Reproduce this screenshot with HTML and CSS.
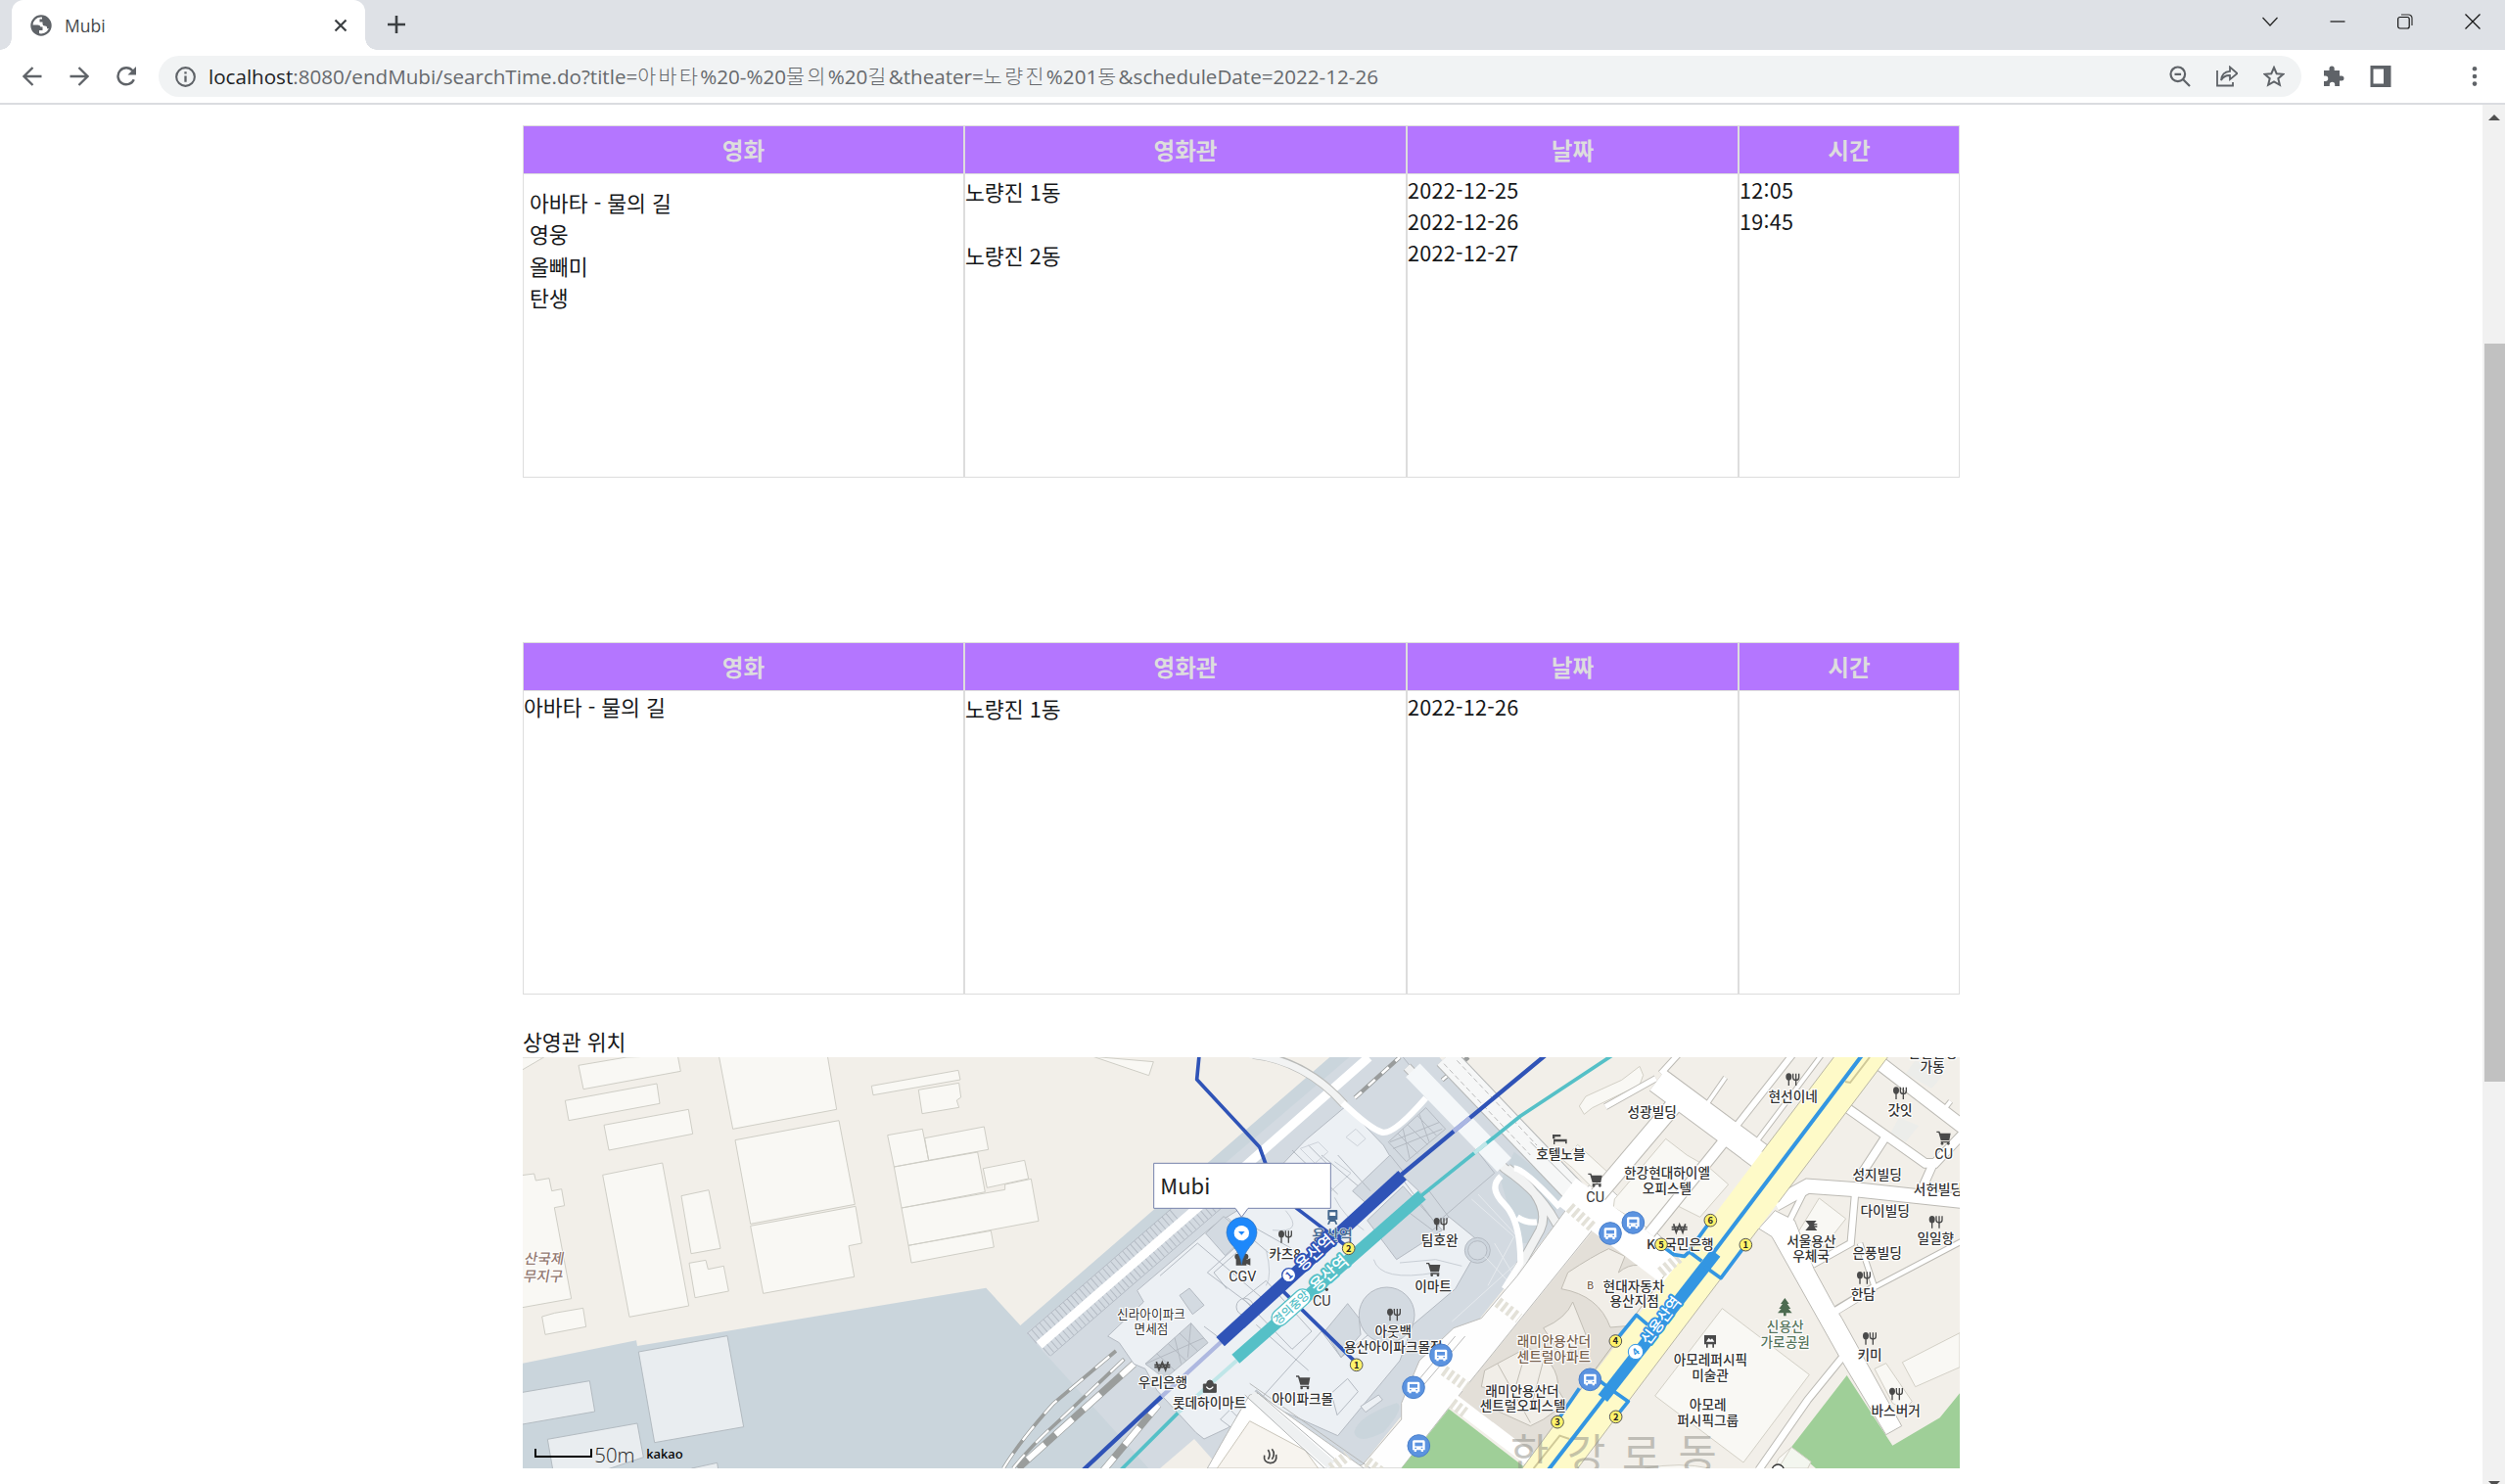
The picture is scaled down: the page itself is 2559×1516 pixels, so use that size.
FILE: index.html
```html
<!DOCTYPE html>
<html lang="ko">
<head>
<meta charset="utf-8">
<title>Mubi</title>
<link rel="stylesheet" href="styles.css">
</head>
<body>
<div class="window">
  <div class="tabstrip">
    <div class="tab">
      <svg class="globe" viewBox="0 0 22 22"><circle cx="11" cy="11" r="9.600" fill="#fff" stroke="#5f6368" stroke-width="2.200"/><path d="M1.500 10.500h6q2.500 0 3 2h2v3.500h-3.500v4.500Q2 18.500 1.500 10.500zM12 1.500v3H9.500v3h3v2q0 2 2.500 2t2 2.500q2.500 1 3.500-2Q21 3.500 12 1.500z" fill="#5f6368"/></svg>
      <span class="tab-title">Mubi</span>
      <svg class="tab-close" viewBox="0 0 14 14"><path d="M1.500 1.500l11 11M12.500 1.500l-11 11" stroke="#3c4043" stroke-width="2.200"/></svg>
    </div>
    <svg class="newtab" viewBox="0 0 18 18"><path d="M9 0v18M0 9h18" stroke="#3c4043" stroke-width="2.600"/></svg>
    <div class="winbtns">
      <svg viewBox="0 0 16 16"><path d="M.5 4L8 12 15.500 4" fill="none" stroke="#222" stroke-width="1.200"/></svg>
      <svg viewBox="0 0 16 16"><path d="M.5 8h15" stroke="#111" stroke-width="1.200"/></svg>
      <svg viewBox="0 0 16 16"><rect x=".7" y="3.500" width="11.500" height="11.500" rx="2" fill="none" stroke="#111" stroke-width="1.200"/><path d="M4 1h7.500a3.500 3.500 0 0 1 3.500 3.500V12" fill="none" stroke="#333" stroke-width="1.200"/></svg>
      <svg viewBox="0 0 16 16"><path d="M.5.5l15 15M15.500.5l-15 15" stroke="#111" stroke-width="1.200"/></svg>
    </div>
  </div>
  <div class="toolbar">
    <div class="navbtns">
      <svg viewBox="0 0 20 20"><path d="M19.500 10H2M10.500 1L1.500 10l9 9" fill="none" stroke="#5f6368" stroke-width="2.300"/></svg>
      <svg viewBox="0 0 20 20"><path d="M.5 10H18M9.500 1l9 9-9 9" fill="none" stroke="#5f6368" stroke-width="2.300"/></svg>
      <svg viewBox="0 0 20 20"><path d="M17.800 13.200A8.500 8.500 0 1 1 16.500 4.300" fill="none" stroke="#5f6368" stroke-width="2.400"/><path d="M20 0v8.500h-8.500z" fill="#5f6368"/></svg>
    </div>
    <div class="omnibox">
      <svg class="info" viewBox="0 0 20 20"><circle cx="10" cy="10" r="8.900" fill="none" stroke="#5f6368" stroke-width="2"/><path d="M10 9v6M10 5v2.200" stroke="#5f6368" stroke-width="2.200"/></svg>
      <span class="url"><b>localhost</b>:8080/endMubi/searchTime.do?title=<i>아바타</i>%20-%20<i>물의</i>%20<i>길</i>&amp;theater=<i>노량진</i>%201<i>동</i>&amp;scheduleDate=2022-12-26</span>
      <div class="omniicons">
        <svg viewBox="0 0 22 22"><circle cx="8.800" cy="8.800" r="7.300" fill="none" stroke="#5f6368" stroke-width="2.200"/><path d="M5.500 8.800h6.600M14 14l7 7" stroke="#5f6368" stroke-width="2.200"/></svg>
        <svg viewBox="0 0 22 22"><path d="M1 5v15.500h16V17" fill="none" stroke="#5f6368" stroke-width="1.800"/><path d="M5 15c.5-6 4-9 9-9.200V1.500L21.500 8 14 14.200V10c-4-.2-7 1.500-9 5z" fill="none" stroke="#5f6368" stroke-width="1.800"/></svg>
        <svg viewBox="0 0 22 22"><path d="M11 2l2.700 6.200 6.800.6-5.200 4.400 1.600 6.600L11 16.300l-5.900 3.500 1.600-6.600L1.500 8.800l6.800-.6z" fill="none" stroke="#5f6368" stroke-width="2"/></svg>
      </div>
    </div>
    <div class="exticons">
      <svg viewBox="0 0 22 22"><path d="M1 5h5.500V3a2.600 2.600 0 0 1 5.200 0v2H17v5.500h2a2.500 2.500 0 0 1 0 5h-2V21h-4.800v-1.500a2.700 2.700 0 0 0-5.400 0V21H1v-5h1.500a2.700 2.700 0 0 0 0-5.500H1z" fill="#5f6368"/></svg>
      <svg viewBox="0 0 22 22"><path d="M.5 0h21v22H.5zM3.500 3.500v15h10.500v-15z" fill="#5f6368" fill-rule="evenodd"/></svg>
      <svg class="dots" viewBox="0 0 22 22"><g fill="#5f6368"><circle cx="11" cy="3.200" r="2.300"/><circle cx="11" cy="11" r="2.300"/><circle cx="11" cy="18.600" r="2.300"/></g></svg>
    </div>
  </div>
  <div class="viewport">
    <main class="page">
      <table class="schedule">
        <colgroup><col class="c1"><col class="c2"><col class="c3"><col class="c4"></colgroup>
        <tr><th>영화</th><th>영화관</th><th>날짜</th><th>시간</th></tr>
        <tr>
          <td class="movies">아바타 - 물의 길<br>영웅<br>올빼미<br>탄생</td>
          <td class="theaters">노량진 1동<br><br>노량진 2동</td>
          <td class="dates">2022-12-25<br>2022-12-26<br>2022-12-27</td>
          <td class="dates">12:05<br>19:45</td>
        </tr>
      </table>
      <table class="schedule result">
        <colgroup><col class="c1"><col class="c2"><col class="c3"><col class="c4"></colgroup>
        <tr><th>영화</th><th>영화관</th><th>날짜</th><th>시간</th></tr>
        <tr>
          <td class="picked">아바타 - 물의 길</td>
          <td class="theaters">노량진 1동</td>
          <td class="dates">2022-12-26</td>
          <td></td>
        </tr>
      </table>
      <div class="map-title">상영관 위치</div>
      <svg class="map" viewBox="-1398 30 4404 1260">
        <defs>
          <g id="food" fill="#4a4a4a"><ellipse cx="-11" cy="-8" rx="9" ry="11"/><path d="M-13 0h4v19h-4zM9 0h4v19H9z"/><path d="M2-18v12q0 8 9 8t9-8v-12M11-18V0" fill="none" stroke="#4a4a4a" stroke-width="4"/></g>
          <g id="cart" fill="#4a4a4a"><path d="M-22-20h9l3 6h31l-4 22h-26l-7-24h-6zM-9 11h27v4H-9z"/><circle cx="-5" cy="18" r="4"/><circle cx="14" cy="18" r="4"/></g>
          <g id="bus"><circle r="34" fill="#5b93e0" stroke="#4a7fca" stroke-width="3"/><path d="M-15-17h30q4 0 4 5v25h-5v5h-7v-5H-7v5h-7v-5h-5v-25q0-5 4-5z" fill="#fff"/><path d="M-12-10h24V1h-24z" fill="#5b93e0"/><path d="M-12 5h5v4h-5zM7 5h5v4H7z" fill="#5b93e0"/></g>
          <g id="won" fill="none" stroke="#4a4a4a" stroke-width="6"><path d="M-18-13l8 26L0-11l10 24 8-26M-24-3h48M-24 4h48" stroke-width="5"/></g>
          <circle id="exit" r="19" fill="#fff36b" stroke="#555" stroke-width="3"/>
        </defs>
        <rect x="-1398" y="30" width="4404" height="1260" fill="#f2efe9"/>
        <!-- railway ground -->
        <path d="M-1398 968L-1050 898-1047 915 22 737 127 852 1000 95 1075 30H1410L1825 465 1720 600 1165 1290H-1398z" fill="#cad5dc"/>
        <path d="M145 875L1100 60 1135 30H1410L1825 465 1720 600 1165 1290H520L255 995z" fill="#d3dae1"/>
        <path d="M1440 30H1900V300L1825 465z" fill="#f2efe9"/>
        <path d="M1600 410L1640 320 1800 445 1710 600 1655 600z" fill="#cad5dc"/>
        <path d="M555 1290L660 1200 740 1290z" fill="#f2efe9"/>

        <!-- western blocks -->
        <g transform="translate(-1440 0)" fill="#f9f8f4" stroke="#cfcec6" stroke-width="3">
          <path d="M30 30H107L42 68 30 70z"/>
          <path d="M213 55L360 30 517 25 526 73 228 128zM172 163L453 111 462 172 183 224zM291 238L550 190 563 265 306 315zM642 20H975L1004 190 686 250zM693 284L1011 224 1060 481 740 541zM740 547L1062 487 1081 600 1041 608 1058 703 779 754zM287 391L470 354 551 792 369 826zM528 455L612 437 648 616 558 632zM552 661L603 652 610 680 658 670 673 747 570 767zM1111 118L1377 70 1383 99 1116 146zM1255 130L1379 109 1385 153 1372 162 1379 184 1266 203z"/>
          <path d="M1160 269L1267 250 1286 346 1180 366zM1274 278L1456 243 1469 313 1286 346zM1180 366L1436 321 1459 443 1203 492zM1203 492L1520 436 1520 420 1600 403 1623 532 1224 607zM1224 607L1477 562 1486 612 1233 660zM1453 371L1580 346 1592 402 1465 430z"/>
          <path d="M30 393L77 387 82 408 123 401 131 440 161 434 170 485 139 491 191 770 30 799zM101 825L140 814 227 799 236 856 111 880z"/>
          <g fill="#e9edf0" stroke="#b3bbc1"><path d="M397 933L669 884 719 1163 446 1211zM30 1059L247 1022 263 1116 30 1157zM118 1201L393 1152 412 1256 250 1310H137zM560 1290L638 1273 642 1300z"/></g>
        </g>
        <path d="M350 28L535 44 521 86z" fill="#f9f8f4" stroke="#cfcec6" stroke-width="3"/>

        <!-- tracks -->
        <g fill="none">
          <path d="M162 892L610 505M203 930L740 465" stroke="#b4bbc4" stroke-width="42" stroke-dasharray="3 13"/>
          <path d="M147 877L590 494M220 945L760 478" stroke="#b4bbc4" stroke-width="3"/>
          <path d="M185 912L830 352 1195 30" stroke="#fff" stroke-width="28"/>
          <g stroke="#9a9d9c">
            <path d="M75 1290Q130 1200 230 1090L420 930" stroke-width="11"/><path d="M105 1290Q160 1220 250 1140L445 955" stroke-width="11"/><path d="M120 1290L475 970" stroke-width="22"/><path d="M370 1310L550 1095" stroke-width="22"/>
          </g>
          <g stroke="#fff"><path d="M75 1290Q130 1200 230 1090L420 930" stroke-width="7" stroke-dasharray="55 50"/><path d="M105 1290Q160 1220 250 1140L445 955" stroke-width="7" stroke-dasharray="55 50"/><path d="M120 1290L475 970" stroke-width="18" stroke-dasharray="0 40 70 45 70 45 70 45"/><path d="M370 1310L550 1095" stroke-width="18" stroke-dasharray="70 50"/></g>
          <path d="M1152 155L1290 30M1420 100L1500 30" stroke="#999c9c" stroke-width="13"/><path d="M1152 155L1290 30M1420 100L1500 30" stroke="#fff" stroke-width="8" stroke-dasharray="28 28"/>
        </g>

        <!-- station complex -->
        <g stroke="#b4bac2" stroke-width="3" fill="#ecf0f4">
          <path d="M395 885L505 780 485 745 720 545 800 495 1000 285 1125 180 1240 300 1290 385 1380 470 1540 600 1460 740 1330 850 1290 960 1100 1190 920 1110 850 1050 790 1130 765 1165 690 1200 665 1180 545 1050 510 985 475 970 430 905z"/>
          <path d="M555 700L670 600 870 770 750 900 690 855M700 690L850 555 1000 640 860 810zM760 520L900 640M810 770L880 715 1020 870 960 925zM850 850L1010 990M920 1110L870 1070 1050 870 1110 950 1290 800M1180 440L1050 330M960 315L1100 450M760 740L720 690 800 620" fill="none"/>
          <path d="M695 570L750 518 820 575 755 638zM615 760L645 738 690 790 655 818zM1060 870L1130 785 1165 830 1170 880 1110 950z" fill="#d3dae1"/>
          <path d="M510 970L650 845 702 905 570 1015z" fill="#cdd4db"/><path d="M545 938L600 990M580 908L635 960M615 876L670 930M510 970L690 890M600 890L620 970M650 845L640 950" fill="none"/>
          <path d="M1145 440L1260 330 1300 380 1200 490zM1190 530L1300 425 1420 560 1280 650zM1310 500L1380 440 1440 520 1390 560z" fill="#d3dae1"/>
          <path d="M1255 290L1370 185 1430 250 1310 350z" fill="#d3dae1"/><path d="M1285 265L1345 325M1315 238L1375 298M1345 210L1402 270M1260 290L1410 230M1300 250L1320 340M1350 205L1380 290M1270 310L1420 250" fill="none"/>
          <path d="M1300 30L1420 180 1580 385 1400 540 1280 380M1100 330L1200 440M1010 300L1080 370" fill="none"/>
          <path d="M1040 290L1070 320 1030 355 985 310zM1155 250L1185 280 1160 302 1125 275z" fill="none" stroke="#cdd2d9"/>
          <path d="M1090 350L1140 385 1080 440M1090 460Q1120 520 1180 560M880 620Q900 700 880 730M900 560Q1000 570 940 500M1210 650Q1230 720 1400 690M1290 660L1400 650 1480 670" fill="none" stroke="#c8ced5"/>
          <path d="M1080 1060L1130 1015 1162 1055 1098 1127zM1170 1100L1225 1065 1237 1080 1185 1118zM740 1140L770 1110 805 1145 780 1170z"/>
          <circle cx="1250" cy="820" r="85" fill="#d3dae1"/><circle cx="1528" cy="622" r="39" fill="#cdd5dd"/><circle cx="1528" cy="622" r="29" fill="#d3dae1"/><circle cx="815" cy="795" r="26" fill="none"/>
        </g>
        <g fill="none" stroke="#e6eaee" stroke-width="3"><path d="M1510 465L1640 580 1560 730M1530 450L1660 590M1550 640L1620 715M1450 840L1660 650M1580 600L1640 700"/></g>
        <path d="M1150 1180Q1160 1130 1280 1090 1310 1100 1240 1180 1160 1220 1150 1180z" fill="#cad5dc"/>

        <!-- overpass and ramps -->
        <g fill="none" stroke-linejoin="round">
          <path d="M840 22Q1000 40 1120 175" stroke="#b9bab8" stroke-width="27"/><path d="M830 22Q1000 40 1120 175" stroke="#f2f3f3" stroke-width="21"/>
          <path d="M1115 170Q1200 250 1235 260T1370 155" stroke="#fff" stroke-width="19"/>
          <path d="M1312 60L1610 370Q1730 450 1780 560T1630 740M1620 370Q1760 470 1720 560L1620 740" stroke="#b5b7b7" stroke-width="30"/>
          <path d="M1312 60L1610 370Q1730 450 1780 560T1630 740M1620 370Q1760 470 1720 560L1620 740" stroke="#f1f2f2" stroke-width="24"/>
          <path d="M1330 70L1610 360" stroke="#f4f7f9" stroke-width="60"/>
          <path d="M1600 395Q1560 430 1610 480T1660 660L1610 740M1640 370Q1670 370 1780 490M1650 520Q1680 540 1710 535" stroke="#fff" stroke-width="19"/>
          <path d="M1430 30L1850 470" stroke="#b5b7b7" stroke-width="75"/><path d="M1430 30L1850 470" stroke="#f6f7f7" stroke-width="69"/>
          <path d="M1425 50L1690 330M1465 40L1710 300" stroke="#bbb" stroke-width="3" stroke-dasharray="16 9"/>
          <path d="M1690 290L1880 480" stroke="#b5b7b7" stroke-width="3"/>
        </g>

        <!-- streets -->
        <g transform="translate(900 0)">
          <path d="M1000 540L1200 680 1160 770 800 1245 560 1080z" fill="#e3dfd8"/>
          <g fill="#f1eee8" stroke="#c2beb5" stroke-width="3"><path d="M905 690Q980 640 1030 617L1080 640 1060 690Q1120 640 1180 700L1200 750 1130 850 1035 858Q1000 760 885 740zM920 780Q900 830 830 860L890 950 960 880zM640 1040L650 990 780 920Q880 960 875 1050L900 1090 830 1140 790 1160 680 1110 690 1050z"/><path d="M690 970L790 1150M780 920L730 1090M830 960L790 1110" fill="none"/></g>
          <path d="M930 455L1000 400 1200 590V690L1000 535 540 1105 395 1290H160L275 1280 395 1140 395 1090 450 960 555 860 640 830 750 700 905 490z" fill="#fefefe" stroke="#bdbdbb" stroke-width="3"/>
          <path d="M430 1040L560 885M450 1050L590 885" fill="none" stroke="#bbb" stroke-width="3"/>
          <path d="M-70 1030L300 1290M20 1130L180 1290" stroke="#b5b7b7" stroke-width="3" fill="none"/>
          <path d="M550 1080L800 1270" stroke="#fff" stroke-width="42"/>
          <path d="M540 1108L770 1285 765 1290H395z" fill="#9fcf98"/>
        </g>
        <path d="M700 1290Q790 1130 830 1065L855 1060 1180 1290z" fill="#fff" stroke="#b9bab8" stroke-width="3"/>
        <path d="M730 1290L830 1145 1000 1235 1040 1290z" fill="#f7f4ef" stroke="#c9c5ba" stroke-width="3"/><path d="M835 1065L1080 1280" stroke="#eef0f1" stroke-width="30"/>
        <path d="M850 1055L1100 1270M815 1065L1060 1290" stroke="#b1b4b5" stroke-width="3"/>

        <g transform="translate(1800 0)">
          <g fill="#f9f8f4" stroke="#d3d0c6" stroke-width="3">
            <path d="M40 180L60 150 170 100 225 58 236 85 225 115 80 185 55 205zM-10 345L35 298 130 385 80 430 20 370zM148 465L305 280 370 330 440 370 497 420 410 520 330 480 260 560 145 490zM775 462L857 525 790 610 690 600zM478 800L745 1003 543 1272 272 1068zM1030 965L1206 875V980L1070 1040zM945 985L980 968 1060 1085 1035 1110 1000 1090zM650 1260L690 1225 750 1270 740 1290H640z"/>
            <path d="M1070 40L1140 70 1150 90 1120 125 1040 80zM1020 215L1080 240 1040 290 995 260z" fill="#ecedea" stroke="none"/>
          </g>
          <g fill="none" stroke="#bcbab4" stroke-linecap="butt">
            <path d="M120 182L275 95M290 80L345 20" stroke-width="22"/>
            <path d="M65 490L340 165" stroke-width="55"/><path d="M280 100L610 345" stroke-width="84"/>
            <path d="M255 570L485 285" stroke-width="38"/><path d="M488 92L420 190" stroke-width="17"/>
            <path d="M695 20L510 255" stroke-width="24"/><path d="M785 20L575 300" stroke-width="18"/>
            <path d="M950 40L1230 255" stroke-width="46"/><path d="M860 185L1100 355 1130 355 1220 260" stroke-width="32"/><path d="M975 280L890 410M1125 355L1085 445" stroke-width="30"/>
            <path d="M640 480L740 425 880 435 1230 473" stroke-width="48"/><path d="M725 450L680 540" stroke-width="22"/>
            <path d="M885 450L872 600 755 665" stroke-width="25"/><path d="M900 600L945 735 1220 590" stroke-width="20"/><path d="M945 735L820 810" stroke-width="28"/>
            <path d="M850 945L740 1080 590 1295" stroke-width="26"/><path d="M1150 200L1178 165" stroke-width="18"/>
          </g>
          <path d="M590 555L640 500 700 530 760 680 820 790 845 830 1028 1160 980 1187 835 945 630 580z" fill="#fff" stroke="#bcbab4" stroke-width="3"/>
          <g fill="none" stroke="#fff">
            <path d="M120 182L275 95M290 80L345 20" stroke-width="16"/>
            <path d="M65 490L340 165" stroke-width="49"/><path d="M280 100L610 345" stroke-width="78"/>
            <path d="M255 570L485 285" stroke-width="32"/><path d="M488 92L420 190" stroke-width="11"/>
            <path d="M695 20L510 255" stroke-width="18"/><path d="M785 20L575 300" stroke-width="12"/>
            <path d="M950 40L1230 255" stroke-width="40"/><path d="M860 185L1100 355 1130 355 1220 260" stroke-width="26"/><path d="M975 280L890 410M1125 355L1085 445" stroke-width="24"/>
            <path d="M640 480L740 425 880 435 1230 473" stroke-width="42"/><path d="M725 450L680 540" stroke-width="16"/>
            <path d="M885 450L872 600 755 665" stroke-width="19"/><path d="M900 600L945 735 1220 590" stroke-width="14"/><path d="M945 735L815 815" stroke-width="22"/>
            <path d="M850 945L740 1080 590 1295" stroke-width="20"/><path d="M1150 200L1178 165" stroke-width="12"/>
            <path d="M0 440L330 690" stroke-width="100"/>
          </g>
          <path d="M820 30H985L35 1290H-135z" fill="#fefac8"/>
          <path d="M985 30L650 475M590 555L35 1290M-135 1290L300 700M820 30L600 320" fill="none" stroke="#b9b6a4" stroke-width="3"/>
          <path d="M930 30L870 108 855 105M-100 1290L-20 1190 10 1200" fill="none" stroke="#d0c998" stroke-width="6"/>
          <path d="M860 1005L1000 1220 1145 1135 1206 1060V1290H765L690 1225z" fill="#9fcf98"/>
          <path d="M690 1225L750 1270 740 1290H650z" fill="#f3f6ef" stroke="#d3d0c6" stroke-width="3"/>
          <path d="M240 1290Q350 1270 440 1290" fill="#f9f8f4" stroke="#d3d0c6" stroke-width="3"/>
          <circle cx="649" cy="1296" r="18" fill="#fff" stroke="#333" stroke-width="4"/>
        </g>
        <!-- crosswalks -->
        <g fill="none" stroke="#e3e1d8" stroke-width="34" stroke-dasharray="11 9">
          <path d="M1810 490L1885 555M1590 780L1655 830M1425 990L1495 1040M1450 1090L1490 1120M2090 690L2150 640M1080 1290L1130 1250M1190 1270L1230 1300"/>
        </g>

        <text class="district" x="1688" y="1293">한</text><text class="district" x="1862" y="1293">강</text><text class="district" x="2030" y="1293">로</text><text class="district" x="2202" y="1293">동</text>

        <!-- subway lines -->
        <g fill="none" stroke-linejoin="round">
          <g stroke="#2f53b7">
            <path d="M675 25L668 98 860 305 880 360M970 490L1130 612M930 745L1155 965" stroke-width="11"/>
            <path d="M1735 25L1295 390M560 1070L320 1295" stroke-width="13"/><path d="M1505 216L1455 257" stroke="#aab6e2" stroke-width="14"/>
            <path d="M745 900L560 1070" stroke="#aeb8e0" stroke-width="13"/>
            <path d="M1298 392L740 902" stroke-width="38"/>
          </g>
          <g stroke="#55c0c7">
            <path d="M1940 25L1660 210 1355 455M610 1120L435 1295" stroke-width="11"/><path d="M1556 293L1518 324M790 960L610 1120" stroke="#bfe6e8" stroke-width="12"/>
            <path d="M1358 453L787 955" stroke-width="36"/>
          </g>
          <g stroke="#3396e2" transform="translate(1800 0)">
            <path d="M908 22L450 630M115 1075L-55 1295" stroke-width="12"/>
            <path d="M458 630L112 1075" stroke-width="36"/>
            <path d="M550 605L474 707 425 672M440 535L375 625 415 655M290 605L330 635 362 640 378 625M150 900L215 820 250 850M152 1132L190 1085 130 1043 100 1020M-28 1145L40 1045" stroke-width="11"/>
          </g>
        </g>

        <!-- place labels -->
        <g class="labels">
          <g class="area"><text transform="translate(-1334 662) skewX(-10)">산국제</text><text transform="translate(-1337 716) skewX(-10)">무지구</text></g>
          <text x="528" y="832" class="sm">신라아이파크</text><text x="528" y="875" class="sm">면세점</text>
          <text x="564" y="1040">우리은행</text><text x="707" y="1105">롯데하이마트</text><text x="992" y="1093">아이파크몰</text>
          <text x="808" y="716" class="latin">CGV</text><text x="938" y="647">카츠8</text><text x="1051" y="793" class="latin">CU</text>
          <text x="1270" y="885">아웃백</text><text x="1270" y="932">용산아이파크몰점</text>
          <text x="1412" y="607">팀호완</text><text x="1392" y="746">이마트</text>
          <text x="1783" y="343">호텔노블</text><text x="1889" y="473" class="latin">CU</text>
          <text x="2063" y="213">성광빌딩</text><text x="2109" y="400">한강현대하이엘</text><text x="2109" y="447">오피스텔</text>
          <text x="2149" y="618">KB국민은행</text><text x="2007" y="746">현대자동차</text><text x="2009" y="792">용산지점</text>
          <g class="brown"><text x="1874" y="741" class="b">B</text><text x="1762" y="914">래미안용산더</text><text x="1762" y="964">센트럴아파트</text></g>
          <text x="1665" y="1067">래미안용산더</text><text x="1667" y="1113">센트럴오피스텔</text>
          <g transform="translate(1800 0)">
            <text x="442" y="971">아모레퍼시픽</text><text x="441" y="1021">미술관</text><text x="434" y="1111">아모레</text><text x="434" y="1159">퍼시픽그룹</text>
            <text x="695" y="164">현선이네</text><text x="1023" y="206">갓잇</text><text x="1123" y="30">한일빌딩</text><text x="1122" y="76">가동</text><text x="1157" y="343" class="latin">CU</text>
            <text x="953" y="405">성지빌딩</text><text x="1140" y="449">서헌빌딩</text><text x="977" y="517">다이빌딩</text><text x="1132" y="601">일일향</text><text x="953" y="644">은풍빌딩</text>
            <text x="751" y="608">서울용산</text><text x="750" y="655">우체국</text><text x="910" y="772">한담</text><text x="930" y="957">키미</text><text x="1010" y="1127">바스버거</text>
            <g class="park"><text x="671" y="870">신용산</text><text x="671" y="917">가로공원</text></g>
          </g>
          <text x="1083" y="592" class="station">용산역</text>
        </g>

        <!-- line name labels -->
        <text class="onblue" transform="translate(990 688) rotate(-42)" font-size="50">용산역</text>
        <circle cx="950" cy="698" r="21" fill="#fff" stroke="#2f53b7" stroke-width="4"/><text class="num blue" transform="translate(950 698) rotate(-42)" y="11">1</text>
        <text class="onteal" transform="translate(1034 752) rotate(-42)" font-size="50">용산역</text>
        <rect x="-72" y="-25" width="144" height="50" rx="25" transform="translate(957 797) rotate(-42)" fill="#fff" stroke="#55c0c7" stroke-width="4"/><text class="pill" transform="translate(957 797) rotate(-42)" y="13">경의중앙</text>
        <text class="online4" transform="translate(2052 914) rotate(-53)" font-size="46">신용산역</text>
        <circle cx="2013" cy="933" r="23" fill="#fff" stroke="#3396e2" stroke-width="3"/><text class="num sky" transform="translate(2013 933) rotate(-42)" y="11">4</text>

        <use href="#food" x="938" y="580"/><use href="#food" x="1414" y="541"/><use href="#food" x="1271" y="819"/>
        <use href="#food" x="2493" y="98"/><use href="#food" x="2822" y="140"/><use href="#food" x="2932" y="535"/><use href="#food" x="2711" y="706"/><use href="#food" x="2729" y="892"/><use href="#food" x="2810" y="1062"/>
        <use href="#cart" x="994" y="1026"/><use href="#cart" x="1393" y="680"/><use href="#cart" x="1889" y="406"/><use href="#cart" x="2957" y="277"/>
        <use href="#won" x="562" y="976"/><use href="#won" x="2147" y="554"/>
        <path d="M688 1032h39v25h-39zM698 1032q0-12 10-12t10 12" fill="#4a4a4a" stroke="#4a4a4a" stroke-width="3"/><path d="M697 1040q10 14 21 0" fill="none" stroke="#fff" stroke-width="4"/>
        <path d="M1758 267h7v13h-7zM1765 267h18v7h-18zM1761 281h41v14h-5v-6h-32v8h-4z" fill="#4a4a4a"/>
        <path d="M2533 531h34l-8 9h10v4h-8l-2 3h10v4h-8l8 10h-36l12-15z" fill="#4a4a4a"/>
        <path d="M2470 768l13 18h-6l11 15h-7l11 13h-18v9h-8v-9h-18l11-13h-7l11-15h-6z" fill="#4d6b50"/>
        <path d="M2223 882h36v28h-6v10h-5v-10h-14v10h-5v-10h-6z" fill="#4a4a4a"/><path d="M2229 902l8-12 5 6 5-4 7 10z" fill="#fff"/>
        <path d="M875 1250q-4 22 18 24 22-2 18-26M886 1262q10-14 0-29M898 1262q12-16 0-31" fill="none" stroke="#4a4a4a" stroke-width="5"/>
        <path d="M1071 498h26q2 0 2 4v26h-6l6 14h-6l-3-8h-13l-3 8h-6l6-14h-5v-26q0-4 2-4z" fill="#46698f"/><path d="M1075 505h18v11h-18z" fill="#fff"/>
        <circle cx="1066" cy="742" r="5" fill="#4a4a4a"/>
        <use href="#bus" x="1332" y="1042"/><use href="#bus" x="1416" y="943"/><use href="#bus" x="1348" y="1221"/><use href="#bus" x="1935" y="570"/><use href="#bus" x="2005" y="537"/><use href="#bus" x="1873" y="1018"/>
        <g class="exits">
          <use href="#exit" x="1133" y="616"/><text x="1133" y="626">2</text><use href="#exit" x="1157" y="973"/><text x="1157" y="983">1</text>
          <use href="#exit" x="2242" y="530"/><text x="2242" y="540">6</text><use href="#exit" x="2350" y="605"/><text x="2350" y="615">1</text>
          <use href="#exit" x="2091" y="604"/><text x="2091" y="614">5</text><use href="#exit" x="1951" y="900"/><text x="1951" y="910">4</text>
          <use href="#exit" x="1952" y="1132"/><text x="1952" y="1142">2</text><use href="#exit" x="1773" y="1148"/><text x="1773" y="1158">3</text>
        </g>

        <!-- marker and info window -->
        <path d="M788 645h32v6l12-5v22l-12-5v5h-32z" fill="#4a4a4a"/><circle cx="793" cy="641" r="9" fill="#4a4a4a"/><circle cx="817" cy="641" r="9" fill="#4a4a4a"/>
        <path d="M805 665Q803 640 780 610 760 590 759 567A46 46 0 0 1 852 567Q851 590 831 610 808 640 805 665z" fill="#1e88fa" stroke="#3674b8" stroke-width="2"/><circle cx="805" cy="569" r="23" fill="#fff"/><path d="M795 564h20l-10 11z" fill="#1e88fa"/>
        <path d="M536 355H1078V493H825L805 520 786 493H536z" fill="#fff" stroke="#7682ab" stroke-width="3"/>
        <text class="bubble" x="556" y="450">Mubi</text>
        <path d="M-1359 1230V1254H-1188V1230" fill="none" stroke="#000" stroke-width="6"/>
        <text class="scale" x="-1178" y="1271">50m</text><text class="kakao" x="-1019" y="1259">kakao</text>
      </svg>
    </main>
    <div class="scrollbar"><i class="up"></i><div class="thumb"></div><i class="down"></i></div>
  </div>
</div>
</body>
</html>
```
FILE: styles.css
```css
* { box-sizing: border-box; }
html, body { margin: 0; height: 100%; overflow: hidden; }
body { font-family: "Noto Sans CJK KR", sans-serif; color: #16181a; background: #fff; }
svg { display: block; flex: none; }
.window { display: flex; flex-direction: column; height: 1516px; }

.tabstrip { display: flex; height: 51px; background: #dee1e6; padding-left: 12px; flex: none; }
.tab { position: relative; display: flex; align-items: center; width: 361px; height: 51px; background: #fff; border-radius: 12px 12px 0 0; padding: 0 18px 0 19px; }
.tab::before, .tab::after { content: ""; position: absolute; bottom: 0; width: 12px; height: 12px; }
.tab::before { left: -12px; background: radial-gradient(circle at 0 0, #dee1e6 11.5px, #fff 12px); }
.tab::after { right: -12px; background: radial-gradient(circle at 100% 0, #dee1e6 11.5px, #fff 12px); }
.globe { width: 22px; height: 22px; }
.tab-title { font: 17.5px "Open Sans", sans-serif; color: #45494d; margin-left: 13px; flex: 1; }
.tab-close { width: 14px; height: 14px; }
.newtab { width: 18px; height: 18px; margin: 16px 0 0 23px; }
.winbtns { display: flex; gap: 53px; margin: 14px 25px 0 auto; }
.winbtns svg { width: 16px; height: 16px; }

.toolbar { display: flex; align-items: center; height: 56px; border-bottom: 2px solid #dadce0; flex: none; }
.navbtns { display: flex; gap: 28px; margin-left: 23px; width: 139px; }
.navbtns svg { width: 20px; height: 20px; }
.omnibox { display: flex; align-items: center; width: 2189px; height: 42px; border-radius: 21px; background: #f1f3f4; padding: 0 17px 0 17px; }
.info { width: 21px; height: 21px; }
.url { font: 20.6px "Open Sans", "Noto Sans CJK KR", sans-serif; line-height: 42px; color: #66696d; margin-left: 13px; flex: 1; white-space: nowrap; }
.url b { font-weight: 400; color: #202124; }
.url i { font-style: normal; font-weight: 300; letter-spacing: 2.4px; }
.omniicons { display: flex; gap: 26px; }
.omniicons svg, .exticons svg { width: 22px; height: 22px; }
.exticons { display: flex; gap: 26px; margin-left: 22px; }
.exticons .dots { margin-left: 48px; }

.viewport { display: flex; flex: 1; min-height: 0; }
.page { width: 1468px; margin: 21px 0 0 534px; }
.schedule { table-layout: fixed; width: 1468px; border-collapse: separate; border-spacing: 0; font-size: 21.6px; line-height: 32.4px; }
.c1 { width: 451px; }
.c2 { width: 452px; }
.c3 { width: 339px; }
.c4 { width: 226px; }
.schedule th { height: 49px; padding: 0; border: 1px solid #ddd; border-bottom: 0; background: #b476ff; color: #ddd; font-size: 23.6px; font-weight: 700; }
.schedule td { height: 311px; padding: 0; border: 1px solid #ddd; vertical-align: top; }
.schedule td.movies { padding: 13px 0 0 6px; }
.schedule td.theaters { padding-top: 2px; }
.schedule td.dates { line-height: 32px; letter-spacing: 0.25px; }
.result { margin-top: 168px; }
.map-title { font-size: 21.6px; line-height: 32px; margin-top: 32px; height: 32px; }
.map { width: 1468px; height: 420px; overflow: hidden; }

.map text { font-family: "Noto Sans CJK KR", sans-serif; }
.labels text { font-size: 41px; fill: #333; text-anchor: middle; paint-order: stroke; stroke: #fff; stroke-width: 7px; stroke-linejoin: round; font-weight: 500; }
.labels .sm { font-size: 38px; font-weight: 400; }
.labels .latin { font-family: "Roboto", sans-serif; font-size: 43px; font-weight: 400; }
.labels .area text { fill: #947a72; font-size: 44px; }
.labels .brown text { fill: #7a6450; }
.labels .brown .b { font-size: 32px; }
.labels .park text { fill: #56755c; }
.labels .station { fill: #46698f; font-size: 45px; stroke-width: 4px; stroke: #dfe6ee; }
.map .district { font-size: 128px; fill: #8d8d85; opacity: .5; text-anchor: middle; }
.onblue, .onteal, .online4 { fill: #fff; font-weight: 500; paint-order: stroke; stroke-width: 12px; stroke-linejoin: round; }
.onblue { stroke: #2f53b7; }
.onteal { stroke: #55c0c7; }
.online4 { stroke: #3396e2; }
.map .num { font-size: 30px; font-weight: 700; text-anchor: middle; }
.blue { fill: #2f53b7; }
.sky { fill: #3396e2; }
.map .pill { font-size: 36px; fill: #55c0c7; text-anchor: middle; font-weight: 500; }
.exits text { font-size: 28px; font-weight: 700; text-anchor: middle; fill: #222; }
.map .bubble { font-size: 66px; fill: #222; }
.map .scale { font-family: "Open Sans", sans-serif; font-weight: 300; font-size: 61px; fill: #222; }
.map .kakao { font-family: "Noto Sans", sans-serif; font-size: 39px; font-weight: 500; fill: #000; }

.scrollbar { display: flex; flex-direction: column; align-items: center; width: 23px; margin-left: auto; background: #f1f1f1; overflow: hidden; }
.up, .down { border: 6px solid transparent; flex: none; }
.up { border-top: 0; border-bottom-color: #505050; margin-top: 10px; }
.thumb { width: 21px; height: 754px; margin: 228px 0 0 2px; background: #c1c1c1; flex: none; }
.down { border-bottom: 0; border-top-color: #505050; margin-top: 408px; }
```
